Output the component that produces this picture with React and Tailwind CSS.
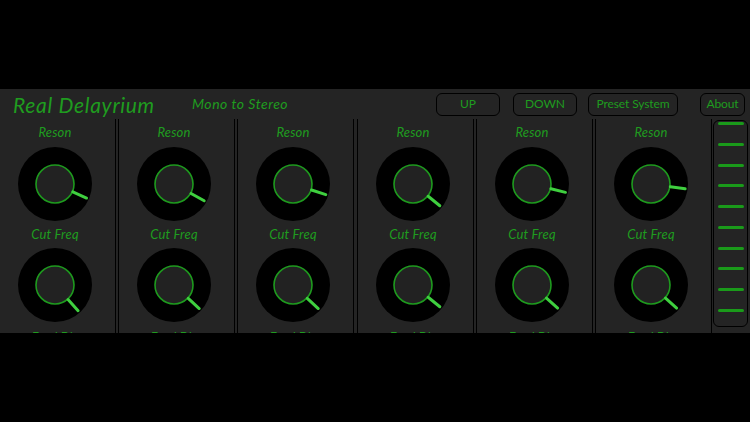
import React from "react";

const BRIGHT = "#3fcf3f";

const cols = [
  { reson: 24, cut: 48 },
  { reson: 29, cut: 43 },
  { reson: 18, cut: 43 },
  { reson: 39, cut: 39 },
  { reson: 14, cut: 42 },
  { reson: 8, cut: 42 },
];

function Knob({ angle }) {
  const a = (angle * Math.PI) / 180;
  const c = 37;
  const x1 = c + 19.5 * Math.cos(a);
  const y1 = c + 19.5 * Math.sin(a);
  const x2 = c + 34.5 * Math.cos(a);
  const y2 = c + 34.5 * Math.sin(a);
  return (
    <svg width="74" height="74" viewBox="0 0 74 74" className="block">
      <circle cx="37" cy="37" r="37" fill="#000" />
      <circle cx="37" cy="37" r="19" fill="#222222" stroke="#1e9a1e" strokeWidth="1.6" />
      <line x1={x1} y1={y1} x2={x2} y2={y2} stroke={BRIGHT} strokeWidth="3" strokeLinecap="round" />
    </svg>
  );
}

function Divider({ wide }) {
  return <div className={`${wide ? "w-[5px]" : "w-[4px]"} shrink-0 border-x-[1.5px] border-black`} />;
}

function Column({ c }) {
  return (
    <div className="w-[115px] shrink-0 pr-[5px] flex flex-col items-center">
      <div className="h-[28px] flex items-center text-[13px] tracking-[0.2px] italic text-[#1f9c1f]">Reson</div>
      <Knob angle={c.reson} />
      <div className="h-[27px] flex items-center text-[13px] tracking-[0.2px] italic text-[#1f9c1f]">Cut Freq</div>
      <Knob angle={c.cut} />
      <div className="h-[27px] flex items-center text-[13px] italic text-[#1f9c1f] mt-[2px]">Feed Dly</div>
    </div>
  );
}

function Btn({ w, children }) {
  return (
    <div
      className={`${w} h-[23px] shrink-0 rounded-[6px] border-[1.5px] border-black flex items-center justify-center text-[12px] tracking-[-0.1px] text-[#1f9c1f]`}
    >
      {children}
    </div>
  );
}

export default function App() {
  return (
    <div className="w-[750px] h-[422px] bg-black flex flex-col" style={{ fontFamily: "Lato, 'Open Sans', sans-serif" }}>
      <div className="h-[89px] shrink-0" />
      <div className="h-[244px] shrink-0 bg-[#242424] flex flex-col overflow-hidden">
        <div className="h-[30px] shrink-0 flex items-center">
          <div className="w-[192px] shrink-0 pl-[13px] text-[21px] tracking-[0.7px] italic text-[#1f9c1f] leading-none">
            Real Delayrium
          </div>
          <div className="flex-1 text-[14px] tracking-[0.5px] italic text-[#1f9c1f] leading-none">Mono to Stereo</div>
          <Btn w="w-[64px]">UP</Btn>
          <div className="w-[13px] shrink-0" />
          <Btn w="w-[64px]">DOWN</Btn>
          <div className="w-[11px] shrink-0" />
          <Btn w="w-[90px]">Preset System</Btn>
          <div className="w-[22px] shrink-0" />
          <Btn w="w-[45px]">About</Btn>
          <div className="w-[5px] shrink-0" />
        </div>
        <div className="flex-1 flex">
          <Column c={cols[0]} />
          <Divider />
          <Column c={cols[1]} />
          <Divider />
          <Column c={cols[2]} />
          <Divider wide />
          <Column c={cols[3]} />
          <Divider />
          <Column c={cols[4]} />
          <Divider />
          <Column c={cols[5]} />
          <div className="w-[1px] shrink-0 bg-black" />
          <div className="flex-1 pl-[1px] pt-[1px]">
            <div className="w-[35px] h-[207px] rounded-[6px] border-[1.5px] border-black flex flex-col items-center justify-between pt-[1px] pb-[14px]">
              {Array.from({ length: 10 }).map((_, i) => (
                <div key={i} className="w-[26px] h-[3px] rounded-full bg-[#1a9a1a]" />
              ))}
            </div>
          </div>
        </div>
      </div>
      <div className="flex-1" />
    </div>
  );
}
